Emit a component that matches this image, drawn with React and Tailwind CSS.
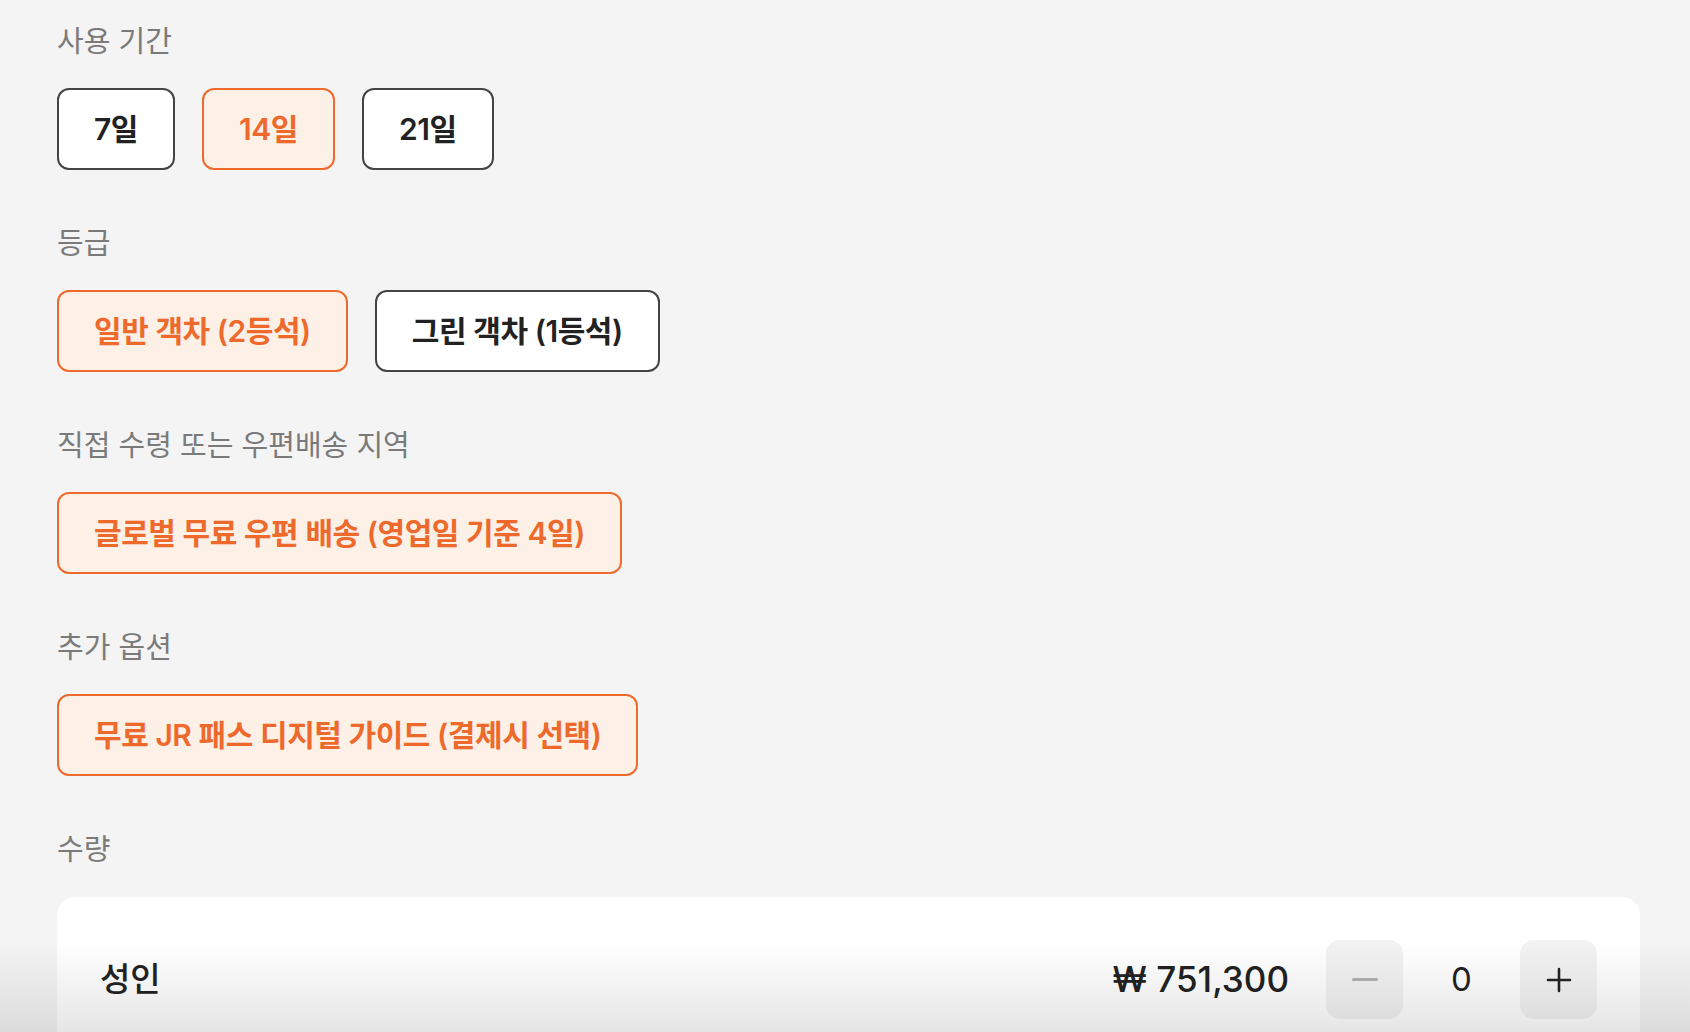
const font = "font-['Inter','Noto_Sans_CJK_KR',sans-serif]";

const sections = [
  { label: "사용 기간", options: [
    { text: "7일", active: false },
    { text: "14일", active: true },
    { text: "21일", active: false },
  ] },
  { label: "등급", options: [
    { text: "일반 객차 (2등석)", active: true },
    { text: "그린 객차 (1등석)", active: false },
  ] },
  { label: "직접 수령 또는 우편배송 지역", options: [
    { text: "글로벌 무료 우편 배송 (영업일 기준 4일)", active: true },
  ] },
  { label: "추가 옵션", options: [
    { text: "무료 JR 패스 디지털 가이드 (결제시 선택)", active: true },
  ] },
];

function Chip({ text, active }) {
  return (
    <button
      className={`h-[82px] rounded-[12px] border-2 px-[35px] text-[30px] font-semibold tracking-[-0.015em] ${
        active
          ? "border-[#ee6a2c] bg-[#fcf0e7] text-[#ee6a2c]"
          : "border-[#444444] bg-white text-[#222222]"
      }`}
    >
      {text}
    </button>
  );
}

export default function App() {
  return (
    <div className={`relative h-[1032px] overflow-hidden bg-[#f4f4f4] pl-[57px] pr-[50px] pt-[22px] ${font}`}>
      {sections.map((s) => (
        <section key={s.label} className="mb-[54px]">
          <p className="mb-[26px] h-[40px] text-[29px] leading-[40px] text-[#7a7a7a]">{s.label}</p>
          <div className="flex gap-[27px]">
            {s.options.map((o) => (
              <Chip key={o.text} {...o} />
            ))}
          </div>
        </section>
      ))}

      <p className="mb-[27px] h-[40px] text-[29px] leading-[40px] text-[#7a7a7a]">수량</p>
      <div className="rounded-[18px] bg-white px-[43px] pt-[43px] pb-[60px]">
        <div className="flex items-center">
          <span className="flex-1 text-[33px] font-medium text-[#222222]">성인</span>
          <span className="mr-[37px] text-[35px] font-medium text-[#222222]">₩ 751,300</span>
          <button className="flex h-[79px] w-[77px] items-center justify-center rounded-[14px] bg-[#f2f2f2]">
            <span className="block h-[3px] w-[26px] rounded-full bg-[#b0b0b0]" />
          </button>
          <span className="w-[117px] text-center text-[33px] text-[#222222]">0</span>
          <button className="relative flex h-[79px] w-[77px] items-center justify-center rounded-[14px] bg-[#f2f2f2]">
            <svg width="28" height="28" viewBox="0 0 28 28" fill="none" stroke="#222" strokeWidth="2.6" strokeLinecap="round">
              <path d="M14 3v22M3 14h22" />
            </svg>
          </button>
        </div>
      </div>

      <div className="pointer-events-none absolute inset-x-0 bottom-0 h-[90px] bg-gradient-to-b from-transparent to-black/10" />
    </div>
  );
}
